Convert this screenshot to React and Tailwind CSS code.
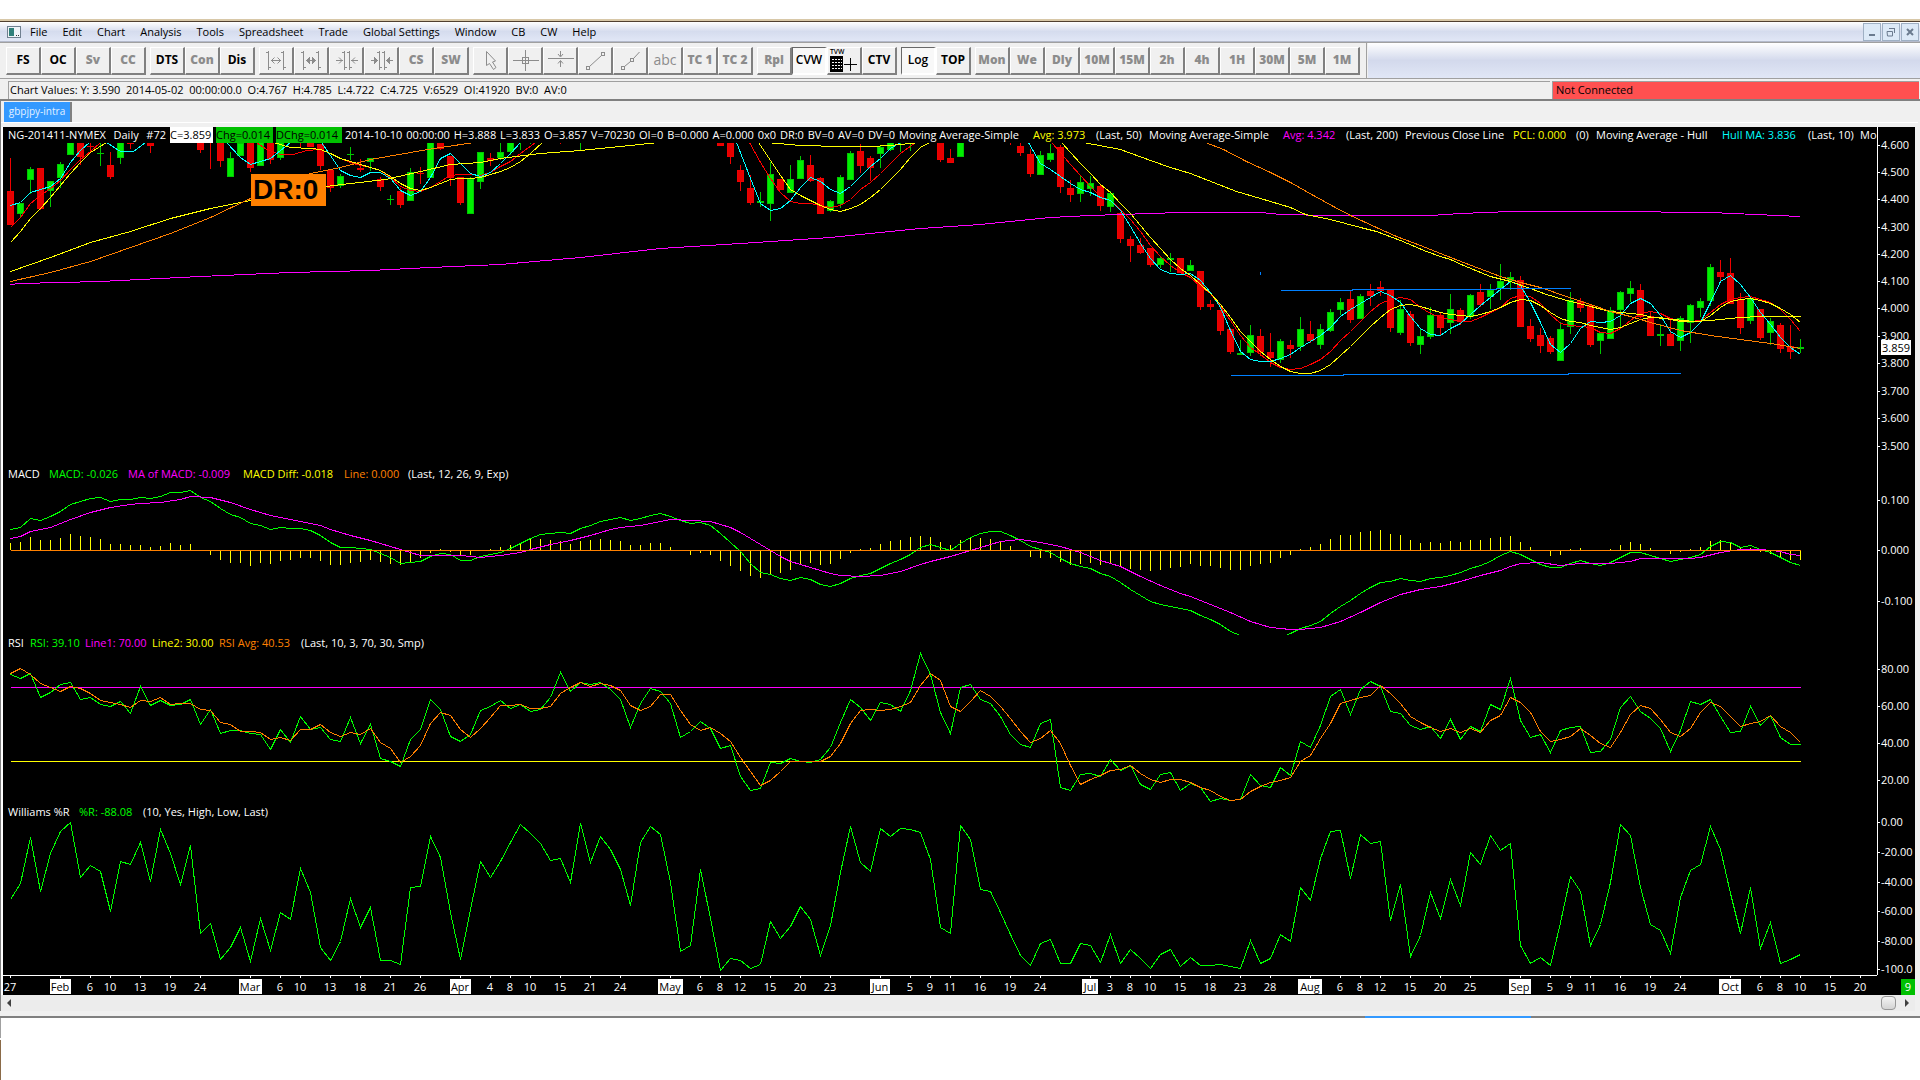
import { clsx } from 'clsx';

// Pane samples are stored in thirds of a pixel, one per bar; `base` is the value at the pane's top edge.
const BAR = 10;
const barX = (i) => 7.5 + i * BAR;
const toY = (v, base) => Math.round((v - base) / 3) + 0.5;

const MENU = ['File', 'Edit', 'Chart', 'Analysis', 'Tools', 'Spreadsheet', 'Trade', 'Global Settings', 'Window', 'CB', 'CW', 'Help'];

const TOOL_GROUPS = [
    [{ t: 'FS' }, { t: 'OC' }, { t: 'Sv', off: true }, { t: 'CC', off: true }],
    [{ t: 'DTS' }, { t: 'Con', off: true }, { t: 'Dis' }],
    [
        { icon: 'widen', t: 'Widen bars', off: true },
        { icon: 'widenBold', t: 'Widen spacing', off: true },
        { icon: 'narrow', t: 'Narrow bars', off: true },
        { icon: 'narrowBold', t: 'Narrow spacing', off: true },
        { t: 'CS', off: true },
        { t: 'SW', off: true }
    ],
    [
        { icon: 'pointer', t: 'Pointer', off: true },
        { icon: 'cross', t: 'Crosshair', off: true },
        { icon: 'hline', t: 'Horizontal line', off: true },
        { icon: 'segment', t: 'Segment', off: true },
        { icon: 'ray', t: 'Ray', off: true },
        { t: 'abc', off: true, plain: true },
        { t: 'TC 1', off: true },
        { t: 'TC 2', off: true }
    ],
    [{ t: 'Rpl', off: true }, { t: 'CVW', on: true }, { icon: 'tvw', t: 'TVW' }, { t: 'CTV' }],
    [{ t: 'Log', on: true }, { t: 'TOP' }],
    ['Mon', 'We', 'Dly', '10M', '15M', '2h', '4h', '1H', '30M', '5M', '1M'].map((t) => ({ t, off: true }))
];

// bar, high, body top, body bottom, low, up
const CANDLES = [
    [0, 114, 213, 314, 314, 0], [1, 248, 248, 283, 290, 1], [2, 141, 147, 180, 222, 1], [3, 144, 144, 267, 270, 0],
    [4, 183, 183, 212, 260, 1], [5, 126, 132, 174, 204, 1], [6, 60, 60, 104, 104, 1], [7, 60, 60, 110, 134, 0],
    [8, 60, 78, 81, 98, 0], [9, 60, 98, 101, 138, 1], [10, 96, 135, 171, 177, 0], [11, 60, 60, 114, 131, 1],
    [12, 60, 60, 71, 88, 0], [14, 60, 60, 77, 98, 0], [19, 60, 60, 90, 98, 0], [20, 60, 60, 60, 147, 0],
    [21, 60, 60, 123, 140, 0], [22, 96, 114, 171, 171, 1], [23, 66, 69, 107, 107, 1], [24, 60, 60, 143, 155, 0],
    [25, 60, 60, 137, 137, 1], [26, 60, 60, 119, 131, 0], [27, 60, 60, 113, 119, 1], [29, 60, 60, 60, 82, 0],
    [30, 60, 60, 82, 82, 0], [31, 72, 72, 137, 149, 0], [32, 147, 149, 203, 215, 0], [33, 162, 168, 197, 203, 1],
    [34, 81, 102, 106, 119, 1], [35, 117, 145, 149, 155, 0], [36, 114, 114, 126, 152, 1], [37, 170, 176, 201, 213, 0],
    [38, 225, 236, 240, 255, 1], [39, 204, 213, 255, 264, 0], [40, 144, 156, 242, 242, 1], [41, 141, 158, 162, 192, 0],
    [42, 60, 60, 173, 173, 1], [43, 60, 60, 87, 90, 0], [44, 108, 108, 174, 197, 0], [45, 171, 171, 248, 255, 0],
    [46, 171, 177, 281, 281, 1], [47, 96, 96, 185, 207, 1], [48, 99, 114, 123, 137, 0], [49, 66, 96, 114, 120, 1],
    [50, 60, 60, 95, 105, 1], [51, 60, 60, 60, 90, 1], [52, 60, 60, 60, 72, 1], [55, 60, 60, 60, 72, 0],
    [57, 60, 60, 60, 92, 1], [71, 60, 60, 77, 77, 0], [72, 60, 69, 110, 131, 0], [73, 135, 150, 185, 213, 0],
    [74, 165, 204, 248, 255, 0], [75, 216, 243, 248, 261, 1], [76, 126, 162, 251, 303, 1], [77, 177, 177, 209, 209, 0],
    [78, 135, 177, 218, 218, 1], [79, 108, 120, 177, 177, 1], [80, 105, 135, 182, 186, 0], [81, 171, 174, 281, 281, 0],
    [82, 240, 243, 272, 276, 1], [83, 165, 171, 251, 264, 1], [84, 93, 99, 180, 180, 1], [85, 72, 93, 137, 159, 0],
    [86, 108, 114, 143, 183, 0], [87, 75, 81, 101, 144, 1], [88, 60, 60, 90, 93, 1], [89, 60, 60, 60, 96, 1],
    [90, 60, 60, 60, 93, 1], [93, 60, 60, 119, 125, 0], [94, 87, 114, 128, 128, 0], [95, 60, 60, 110, 110, 1],
    [100, 60, 60, 60, 75, 0], [101, 66, 78, 99, 107, 0], [102, 87, 102, 161, 170, 0], [103, 93, 105, 164, 164, 1],
    [104, 72, 99, 119, 125, 1], [105, 75, 81, 201, 219, 0], [106, 180, 204, 225, 246, 0], [107, 168, 186, 221, 246, 1],
    [108, 168, 189, 207, 228, 1], [109, 192, 198, 257, 273, 0], [110, 213, 219, 261, 276, 1], [111, 276, 279, 357, 369, 0],
    [112, 348, 357, 377, 426, 0], [113, 354, 375, 399, 402, 0], [114, 384, 384, 434, 441, 0], [115, 408, 414, 434, 444, 1],
    [116, 399, 414, 419, 456, 1], [117, 414, 414, 458, 458, 0], [118, 420, 435, 453, 453, 1], [119, 453, 453, 561, 570, 0],
    [120, 540, 551, 561, 570, 0], [121, 570, 570, 633, 645, 0], [122, 624, 627, 696, 702, 0], [123, 660, 699, 704, 704, 1],
    [124, 615, 645, 699, 708, 1], [125, 627, 648, 696, 708, 0], [126, 639, 696, 714, 741, 0], [127, 657, 663, 720, 728, 1],
    [128, 660, 675, 686, 714, 0], [129, 591, 627, 681, 692, 1], [130, 603, 642, 662, 670, 0], [131, 612, 627, 674, 686, 1],
    [132, 567, 576, 633, 636, 1], [133, 534, 546, 570, 585, 1], [134, 513, 537, 600, 609, 0], [135, 522, 528, 597, 597, 1],
    [136, 492, 513, 528, 558, 0], [137, 483, 501, 513, 528, 0], [138, 507, 507, 624, 636, 0], [139, 540, 567, 638, 645, 1],
    [140, 573, 582, 669, 678, 0], [141, 627, 648, 675, 702, 1], [142, 561, 585, 650, 657, 1], [143, 579, 585, 624, 645, 0],
    [144, 522, 567, 609, 642, 1], [145, 564, 570, 605, 615, 0], [146, 522, 525, 591, 597, 1], [147, 492, 516, 555, 561, 0],
    [148, 492, 510, 531, 567, 1], [149, 431, 483, 506, 540, 1], [150, 456, 471, 483, 510, 1], [151, 468, 480, 621, 621, 0],
    [152, 597, 618, 657, 666, 0], [153, 624, 645, 677, 699, 0], [154, 648, 654, 695, 702, 0], [155, 606, 627, 723, 723, 1],
    [156, 516, 540, 621, 642, 1], [157, 534, 543, 564, 576, 0], [158, 552, 555, 674, 681, 0], [159, 639, 639, 662, 702, 1],
    [160, 561, 570, 657, 657, 1], [161, 513, 516, 570, 624, 1], [162, 483, 504, 521, 546, 1], [163, 492, 510, 591, 594, 0],
    [164, 576, 588, 648, 648, 0], [165, 612, 642, 647, 678, 1], [166, 597, 642, 677, 678, 0], [167, 588, 594, 663, 693, 1],
    [168, 552, 555, 609, 669, 1], [169, 534, 543, 564, 591, 1], [170, 432, 441, 543, 558, 1], [171, 420, 456, 471, 486, 0],
    [172, 414, 459, 552, 552, 0], [173, 519, 537, 624, 642, 0], [174, 528, 534, 603, 612, 1], [175, 567, 567, 654, 660, 0],
    [176, 594, 603, 639, 675, 1], [177, 609, 615, 687, 699, 0], [178, 615, 678, 696, 717, 0], [179, 657, 681, 686, 699, 1]
];

const seq = (start, values) => values.map((v, k) => [start + k, v]);

const PRICE_LINES = [
    // moving average 200
    { color: '#ff00ff', pts: [[0, 491], [1, 488], [9, 482], [19, 467], [28, 457], [36, 450], [42, 442], [49, 433], [57, 412], [65, 385], [73, 370], [82, 350], [91, 323], [97, 311], [104, 292], [108, 285], [111, 282], [117, 277], [125, 277], [127, 281], [132, 284], [142, 284], [145, 279], [150, 274], [160, 274], [170, 277], [179, 287]] },
    // hull 30
    { color: '#ff0000', pts: [[0, 322], [1, 290], [2, 250], [3, 224], [4, 204], [5, 180], [6, 148], [7, 118], [8, 92], [9, 66]] },
    { color: '#ff0000', pts: [[24.6, 66], [25.6, 88], [27, 103], [28.3, 102], [29.6, 90], ...seq(31, [87, 98, 115, 127, 135, 140, 150, 172, 198, 210, 212, 200, 182, 166, 163, 163, 166, 155, 137, 122, 100]), [52.5, 66]] },
    { color: '#ff0000', pts: [[73.9, 66], ...seq(75, [127, 175, 215, 243, 249, 250, 256, 262, 255, 238, 208, 185, 158, 130, 100]), [90.5, 66]] },
    { color: '#ff0000', pts: [[104.1, 66], ...seq(105, [95, 132, 165, 198, 228, 240, 268, 298, 332, 375, 407, 435, 456, 472, 497, 520, 558, 600, 645, 680, 702, 725, 740, 748, 744, 733, 718, 692, 660, 633, 602, 572, 548, 536, 532, 538, 560, 578, 592, 597, 604, 602, 592, 577, 560, 535, 526, 529, 550, 582, 608, 614, 618, 622, 635, 638, 625, 600, 578, 573, 580, 593, 600, 604, 600, 577, 552, 538, 532, 529, 538, 547, 566, 597, 632])] },
    // hull 10
    { color: '#00ffff', pts: [...seq(0, [254, 245, 216, 207, 198, 173, 125, 90]), [7.9, 66]] },
    { color: '#00ffff', pts: [[9.6, 66], [11, 93], [12.3, 93], [13.5, 66]] },
    { color: '#00ffff', pts: [[21.6, 66], [23, 110], [24, 132], [25, 123], [26, 113], [27, 90], [28, 66]] },
    { color: '#00ffff', pts: [[31.1, 66], ...seq(32, [105, 150, 165, 172, 155, 155, 173, 210, 226, 212, 170, 115, 98, 130, 160, 167, 155, 130, 100, 66])] },
    { color: '#00ffff', pts: [[72.6, 66], ...seq(74, [175, 250, 270, 265, 240, 200, 170, 182, 208, 220, 198, 167, 138, 113, 85, 66])] },
    { color: '#00ffff', pts: [[101.8, 66], ...seq(103, [128, 147, 168, 190, 208, 215, 230, 240, 270, 318, 370, 415, 447, 458, 463, 460, 480, 515, 560, 630, 692, 716, 724, 724, 714, 702, 680, 662, 645, 622, 588, 568, 548, 530, 514, 525, 546, 588, 625, 642, 644, 623, 608, 582, 555, 530, 506, 482, 496, 545, 605, 672, 697, 670, 625, 604, 607, 604, 585, 548, 535, 550, 585, 633, 650, 637, 605, 545, 482, 466, 493, 530, 577, 612, 652, 680, 701])] },
    // hull 40
    { color: '#ffff00', pts: [...seq(0, [365, 333, 295, 265, 230, 195, 158, 125, 97]), [9.6, 66]] },
    { color: '#ffff00', pts: [[26.3, 66], [28, 80], [30, 85], ...seq(31, [88, 98, 114, 122, 132, 140, 150, 168, 190, 204, 209, 202, 190, 178, 175, 174, 172, 163, 154, 141, 122, 100]), [53.2, 66]] },
    { color: '#ffff00', pts: [[74.8, 66], ...seq(76, [120, 165, 207, 226, 240, 256, 267, 273, 265, 253, 232, 207, 178, 147, 112, 80]), [91.9, 66]] },
    { color: '#ffff00', pts: [[105.1, 66], ...seq(107, [128, 160, 192, 215, 250, 280, 316, 350, 385, 418, 445, 466, 492, 520, 553, 592, 633, 663, 693, 717, 738, 752, 760, 758, 750, 733, 705, 678, 648, 618, 590, 568, 556, 553, 558, 567, 575, 582, 586, 587, 582, 574, 562, 545, 538, 540, 555, 575, 593, 602, 606, 614, 622, 626, 622, 610, 597, 592, 592, 597, 602, 604, 602, 585, 562, 544, 538, 535, 541, 550, 563, 582, 605])] },
    // moving average 50
    { color: '#ffff00', pts: [[0, 452], [4, 410], [8, 365], [12, 333], [16, 293], [20, 264], [24, 240], [31.6, 197], [34, 189], [37.5, 177], [41, 154], [44, 133], [47, 125], [49, 113], [53, 98], [57, 90], [61, 77], [64.8, 66]] },
    { color: '#ffff00', pts: [[75.6, 66], [79, 74], [83, 79], [86, 79], [88, 75], [91, 66]] },
    { color: '#ffff00', pts: [[107.3, 66], [111, 88], [114, 120], [116, 140], [118, 158], [120.3, 185], [122.6, 212], [125, 233], [128, 262], [129.5, 282], [132, 298], [135, 322], [136.6, 333], [139, 360], [141.6, 393], [143, 408], [144, 418], [145.3, 435], [148, 467], [150, 483], [152, 505], [153.6, 522], [155.3, 536], [158, 558], [160, 572], [163, 583], [164.3, 590], [166.3, 598], [168.3, 604], [170, 600], [173, 592], [175, 589], [179, 589]] },
    // moving average 100
    { color: '#ff8000', pts: [[0, 482], [4, 455], [8, 423], [12, 382], [16, 340], [20, 290], [24, 235], [30, 160], [33, 142], [36, 117], [40, 97], [43, 82], [46.4, 66]] },
    { color: '#ff8000', pts: [[119.5, 66], [121.3, 88], [123.6, 122], [126, 157], [128, 187], [130.3, 225], [132.3, 258], [134, 285], [136.6, 322], [138.6, 348], [141, 376], [143, 400], [145.3, 425], [149, 468], [151, 485], [153, 502], [155.6, 529], [158, 552], [160, 572], [162, 587], [164, 606], [167, 630], [170, 645], [173, 657], [176, 668], [179, 684]] },
    // channel
    { color: '#0080ff', pts: [[127, 511], [134.2, 511], [134.2, 508], [148.6, 508], [148.6, 505], [156, 505]] },
    { color: '#0080ff', pts: [[122, 766], [133.3, 766], [133.3, 763], [155.8, 763], [155.8, 760], [167, 760]] },
    { color: '#0080ff', pts: [[125, 453], [125, 462]] }
];

const MACD_DIFF = [
    249, 246, 231, 240, 240, 234, 222, 228, 231, 237, 252, 252, 255, 255, 261, 258, 249, 255, 252, 275,
    285, 300, 309, 309, 318, 309, 312, 303, 300, 294, 294, 303, 315, 315, 309, 306, 300, 306, 312, 315,
    306, 296, 279, 267, 276, 290, 286, 274, 267, 261, 255, 249, 237, 237, 240, 243, 252, 243, 240, 237,
    240, 243, 255, 255, 249, 249, 261, 275, 285, 279, 285, 303, 318, 333, 348, 354, 345, 339, 330, 312,
    309, 315, 312, 297, 279, 267, 264, 252, 243, 240, 231, 228, 231, 246, 255, 240, 234, 234, 237, 246,
    258, 275, 291, 294, 294, 306, 315, 312, 309, 315, 312, 320, 327, 330, 333, 330, 324, 321, 312, 318,
    318, 324, 330, 330, 318, 312, 309, 294, 285, 267, 261, 252, 237, 225, 225, 216, 213, 210, 222, 225,
    240, 249, 246, 249, 243, 246, 240, 240, 234, 231, 228, 246, 261, 275, 288, 285, 267, 264, 275, 275,
    267, 255, 246, 252, 264, 275, 282, 276, 267, 261, 243, 240, 249, 261, 264, 278, 282, 291, 300, 300
];

const MACD = [
    208, 200, 175, 179, 168, 152, 131, 122, 115, 112, 124, 118, 118, 112, 115, 109, 97, 97, 91, 110,
    124, 145, 162, 172, 189, 194, 206, 202, 205, 205, 211, 225, 245, 260, 260, 265, 268, 279, 292, 310,
    307, 303, 287, 278, 283, 299, 299, 287, 283, 275, 263, 250, 234, 221, 220, 216, 220, 204, 195, 182,
    176, 172, 181, 175, 166, 160, 169, 180, 190, 187, 195, 218, 246, 273, 308, 336, 343, 354, 361, 352,
    356, 371, 379, 370, 353, 344, 338, 325, 310, 296, 281, 262, 253, 261, 270, 248, 230, 220, 214, 214,
    225, 240, 258, 267, 275, 293, 310, 319, 325, 339, 347, 365, 387, 406, 424, 432, 437, 444, 449, 465,
    476, 492, 512, 525, 540, 545, 540, 530, 520, 505, 496, 482, 458, 437, 421, 400, 382, 366, 364, 355,
    361, 364, 355, 352, 344, 337, 323, 314, 302, 286, 272, 282, 297, 311, 322, 322, 310, 300, 310, 314,
    305, 291, 277, 277, 285, 295, 304, 298, 290, 282, 259, 244, 247, 260, 256, 268, 276, 292, 305, 314
];

const MACD_MA = [
    [0, 233], [1, 227], [2, 214], [4, 200], [6, 178], [8, 157], [10, 142], [12, 133], [13, 130], [15, 126], [17, 117], [18, 109], [20, 111],
    [22, 127], [24, 148], [26, 165], [28, 178], [30, 189], [31, 194], [32, 208], [34, 226], [36, 240], [38, 258], [40, 276], [41, 284],
    [45, 284], [47, 290], [49, 284], [51, 277], [52, 268], [54, 251], [56, 240], [58, 224], [60, 207], [61, 200], [63, 194], [65, 182],
    [66, 178], [68, 181], [70, 184], [71, 192], [72, 202], [73, 215], [74, 235], [75, 251], [76, 270], [77, 289], [78, 303], [80, 322],
    [82, 339], [83, 346], [85, 347], [87, 346], [89, 333], [91, 313], [92, 303], [94, 287], [95, 278], [97, 262], [99, 242], [101, 238],
    [103, 245], [105, 258], [107, 277], [109, 300], [111, 318], [113, 347], [115, 374], [117, 398], [118, 407], [120, 431], [122, 455],
    [124, 483], [126, 502], [128, 508], [129, 508], [131, 502], [133, 483], [135, 455], [137, 425], [139, 401], [141, 388], [143, 377],
    [145, 362], [147, 346], [149, 329], [150, 317], [151, 310], [153, 307], [155, 314], [157, 310], [160, 310], [162, 303], [163, 295],
    [168, 295], [169, 291], [171, 277], [173, 268], [175, 266], [176, 269], [177, 273], [178, 281], [179, 286]
];

const RSI = [
    643, 655, 640, 712, 695, 671, 667, 718, 712, 732, 737, 724, 759, 677, 736, 721, 736, 733, 716, 791,
    747, 818, 811, 811, 820, 821, 867, 808, 847, 769, 807, 801, 836, 844, 772, 850, 793, 895, 904, 918,
    838, 808, 718, 746, 829, 844, 823, 749, 738, 721, 745, 732, 752, 748, 711, 637, 693, 667, 671, 665,
    687, 718, 802, 729, 685, 692, 729, 832, 812, 784, 804, 865, 856, 948, 991, 985, 905, 910, 895, 904,
    907, 897, 860, 787, 718, 741, 781, 727, 733, 753, 690, 580, 643, 757, 818, 681, 673, 717, 730, 767,
    821, 853, 862, 788, 778, 982, 989, 943, 940, 948, 898, 931, 916, 971, 988, 943, 937, 991, 969, 981,
    1024, 1015, 1021, 1016, 943, 975, 982, 922, 945, 844, 862, 795, 707, 688, 761, 687, 663, 679, 753, 758,
    795, 806, 799, 835, 777, 836, 797, 812, 733, 746, 655, 780, 832, 823, 875, 809, 802, 799, 877, 874,
    836, 740, 709, 752, 773, 803, 874, 811, 724, 733, 718, 767, 817, 813, 737, 796, 764, 832, 853, 853
];

const RSI_AVG = RSI.map((v, i) => (i < 3 ? [640, 625, 643][i] : (v + RSI[i - 1] + RSI[i - 2]) / 3));

const WILLIAMS = [
    326, 278, 142, 302, 190, 122, 96, 260, 224, 242, 362, 214, 223, 157, 274, 118, 188, 281, 166, 428,
    398, 506, 470, 412, 512, 385, 479, 365, 387, 235, 305, 470, 511, 452, 325, 410, 352, 511, 511, 521,
    292, 289, 139, 200, 365, 506, 358, 214, 260, 212, 157, 102, 130, 160, 211, 205, 277, 100, 217, 139,
    178, 238, 344, 157, 108, 132, 275, 482, 464, 238, 385, 541, 505, 509, 535, 523, 394, 443, 409, 349,
    388, 496, 404, 245, 109, 217, 243, 115, 139, 115, 118, 125, 208, 412, 430, 106, 148, 298, 304, 365,
    433, 494, 526, 460, 448, 520, 520, 460, 464, 517, 433, 520, 478, 505, 535, 492, 478, 529, 502, 526,
    526, 523, 529, 535, 451, 520, 503, 433, 454, 290, 331, 203, 124, 121, 265, 133, 160, 154, 389, 283,
    499, 436, 307, 383, 268, 345, 187, 223, 136, 181, 160, 466, 520, 502, 526, 397, 259, 302, 466, 403,
    277, 103, 134, 292, 403, 421, 488, 322, 241, 223, 109, 178, 310, 430, 290, 475, 397, 520, 508, 491
];

const DATES = [
    [0, '27'], [5, 'Feb', 21], [8, '6'], [10, '10'], [13, '13'], [16, '19'], [19, '24'], [24, 'Mar', 23], [27, '6'], [29, '10'],
    [32, '13'], [35, '18'], [38, '21'], [41, '26'], [45, 'Apr', 21], [48, '4'], [50, '8'], [52, '10'], [55, '15'], [58, '21'],
    [61, '24'], [66, 'May', 25], [69, '6'], [71, '8'], [73, '12'], [76, '15'], [79, '20'], [82, '23'], [87, 'Jun', 20], [90, '5'],
    [92, '9'], [94, '11'], [97, '16'], [100, '19'], [103, '24'], [108, 'Jul', 16], [110, '3'], [112, '8'], [114, '10'], [117, '15'],
    [120, '18'], [123, '23'], [126, '28'], [130, 'Aug', 24], [133, '6'], [135, '8'], [137, '12'], [140, '15'], [143, '20'], [146, '25'],
    [151, 'Sep', 22], [154, '5'], [156, '9'], [158, '11'], [161, '16'], [164, '19'], [167, '24'], [172, 'Oct', 22], [175, '6'],
    [177, '8'], [179, '10'], [182, '15'], [185, '20']
];

const PRICE_TICKS = [
    [19, '4.600'], [46, '4.500'], [73, '4.400'], [101, '4.300'], [128, '4.200'], [155, '4.100'],
    [182, '4.000'], [210, '3.900'], [237, '3.800'], [265, '3.700'], [292, '3.600'], [320, '3.500']
];

const Line = ({ pts, color, base }) => (
    <polyline
        points={pts.map(([i, v]) => `${barX(i)},${toY(v, base)}`).join(' ')}
        fill="none"
        stroke={color}
        strokeWidth="1"
    />
);

const Candle = ({ bar, base }) => {
    const [i, high, top, bottom, low, up] = bar;
    const x = 4 + i * BAR;
    const yHigh = Math.round((high - base) / 3);
    const yLow = Math.round((low - base) / 3);
    const yTop = Math.round((top - base) / 3);
    const yBottom = Math.round((bottom - base) / 3);
    const edge = up ? '#00c800' : '#f00000';

    return (
        <g>
            <rect x={x + 3} y={yHigh} width="1" height={Math.max(yLow - yHigh, 1)} fill={edge} />
            {bottom > top && <rect x={x} y={yTop} width="7" height={Math.max(yBottom - yTop, 1)} fill={edge} />}
            {yBottom - yTop > 2 && (
                <rect x={x + 1} y={yTop + 1} width="5" height={yBottom - yTop - 2} fill={up ? '#00ee00' : '#e60000'} />
            )}
        </g>
    );
};

const Axis = ({ ticks, marker }) => (
    <svg className="h-full w-[38px] shrink-0 border-l border-white" aria-hidden="true">
        {ticks.map(([y, label]) => (
            <g key={label}>
                <rect x="0" y={y - 1} width="2" height="1" fill="#fff" />
                <text x="3" y={y + 3} fill="#fff" fontSize="11">{label}</text>
            </g>
        ))}
        {marker && (
            <g>
                <rect x="3" y={marker[0] - 8} width="30" height="15" fill="#fff" />
                <text x="4" y={marker[0] + 4} fill="#000" fontSize="11">{marker[1]}</text>
            </g>
        )}
    </svg>
);

const Pane = ({ height, header, ticks, marker, children }) => (
    <section className={clsx('flex w-full', height)}>
        <div className="flex min-w-0 flex-1 flex-col overflow-hidden">
            <div className="flex h-4 shrink-0 items-center overflow-hidden whitespace-pre pl-[5px] leading-4">{header}</div>
            <svg className="block w-full min-h-0 flex-1" shapeRendering="crispEdges">{children}</svg>
        </div>
        <Axis ticks={ticks} marker={marker} />
    </section>
);

const ToolIcon = ({ name }) => {
    const common = {
        width: 29, height: 22, viewBox: '0 0 29 22', fill: 'none',
        stroke: '#8c8c8c', strokeWidth: 1, shapeRendering: 'crispEdges'
    };
    switch (name) {
        case 'widen':
            return (
                <svg {...common}>
                    <path d="M6.5 2v19M21.5 2v19M4 3.5h2M7 18.5h2M19 3.5h2M22 18.5h2M9 11.5h10" />
                    <path d="M12.5 8.5l-3 3 3 3M15.5 8.5l3 3-3 3" shapeRendering="auto" />
                </svg>
            );
        case 'widenBold':
            return (
                <svg {...common}>
                    <path d="M6.5 2v19M21.5 2v19M4 3.5h2M7 18.5h2M19 3.5h2M22 18.5h2M9 11.5h10" />
                    <path d="M13 7.5l-4 4 4 4zM15 7.5l4 4-4 4z" fill="#8c8c8c" stroke="none" />
                </svg>
            );
        case 'narrow':
            return (
                <svg {...common}>
                    <path d="M12.5 2v19M17.5 2v19M10 3.5h2M13 18.5h2M15 3.5h2M18 18.5h2M4 11.5h7M19 11.5h7" />
                    <path d="M7 8.5l3 3-3 3M23 8.5l-3 3 3 3" shapeRendering="auto" />
                </svg>
            );
        case 'narrowBold':
            return (
                <svg {...common}>
                    <path d="M12.5 2v19M17.5 2v19M10 3.5h2M13 18.5h2M15 3.5h2M18 18.5h2M4 11.5h7M19 11.5h7" />
                    <path d="M7 7.5l4 4-4 4zM23 7.5l-4 4 4 4z" fill="#8c8c8c" stroke="none" />
                </svg>
            );
        case 'pointer':
            return (
                <svg {...common} shapeRendering="auto">
                    <path d="M10.5 2.5v14l3-2 4 6 2.5-2-3.5-5.5 3-1z" />
                </svg>
            );
        case 'cross':
            return (
                <svg {...common}>
                    <path d="M2 11.5h26M14.5 1v21M11.5 8.5h6v6h-6z" />
                </svg>
            );
        case 'hline':
            return (
                <svg {...common}>
                    <path d="M2 9.5h26M14.5 2v5M14.5 12v6" />
                    <path d="M12 5l2.5 3L17 5M12 14.5l2.5-3 2.5 3" shapeRendering="auto" />
                </svg>
            );
        case 'segment':
            return (
                <svg {...common}>
                    <path d="M5.5 17.5h3v3h-3zM20.5 3.5h3v3h-3z" />
                    <path d="M8.5 17.5L20.5 6.5" shapeRendering="auto" />
                </svg>
            );
        case 'ray':
            return (
                <svg {...common}>
                    <path d="M5.5 17.5h3v3h-3zM14.5 9.5h3v3h-3z" />
                    <path d="M8.5 17.5l6-5M17.5 9.5l6-6.5" shapeRendering="auto" />
                </svg>
            );
        default:
            return (
                <svg {...common} width="33" height="25" viewBox="0 0 33 25" stroke="#000">
                    <text x="2" y="6" fontSize="7" fontWeight="600" fill="#000" stroke="none">TVW</text>
                    <rect x="2" y="8" width="13" height="16" fill="#000" stroke="none" />
                    <path d="M4 11.5h10M4 14.5h10M4 17.5h10M4 20.5h10" stroke="#fff" strokeDasharray="2 1" />
                    <path d="M17 16.5h13M23.5 10v13" />
                </svg>
            );
    }
};

const ToolButton = ({ tool }) => (
    <button
        type="button"
        disabled={tool.off}
        aria-label={tool.t}
        aria-pressed={tool.on}
        className={clsx(
            'flex h-7 w-[35px] items-center justify-center overflow-hidden border-r-2 border-b-2 border-l border-t leading-4',
            tool.on
                ? 'border-l-[#696969] border-t-[#696969] border-r-white border-b-white bg-[#f8f8f8] text-black'
                : 'border-l-white border-t-white border-r-[#808080] border-b-[#808080] bg-[#f0f0f0]',
            tool.off && 'text-[#8c8c8c]',
            tool.plain ? 'text-sm font-normal' : 'text-[12px]',
            tool.off && !tool.plain && 'font-extrabold',
            !tool.off && (tool.on ? 'font-semibold' : 'font-bold')
        )}
    >
        {tool.icon ? <ToolIcon name={tool.icon} /> : tool.t}
    </button>
);

const MenuBar = () => (
    <nav className="flex h-5 items-center border-b border-[#b4bacb] bg-linear-to-b from-white via-[#d5dcee] to-[#e1e7f6]">
        <svg className="ml-[7px] shrink-0" width="14" height="12" viewBox="0 0 14 12" aria-hidden="true">
            <rect x="0.5" y="0.5" width="13" height="11" fill="#eef3f8" stroke="#708090" />
            <rect x="2" y="2" width="5" height="8" fill="#2f7f7a" />
            <path d="M9 9.5h1M11 9.5h1" stroke="#333" />
        </svg>
        <div className="flex flex-1 items-center gap-[15px] pl-[9px]">
            {MENU.map((item) => (
                <button key={item} type="button" className="leading-4 text-black">{item}</button>
            ))}
        </div>
        <div className="flex gap-px pr-px">
            {['Minimize', 'Restore', 'Close'].map((label) => (
                <button key={label} type="button" aria-label={label} className="flex h-[18px] w-[18px] items-center justify-center border border-[#9fb0c4] bg-[#dce9f7]">
                    <svg width="10" height="10" viewBox="0 0 10 10" fill="none" stroke="#6b7b8f" strokeWidth="2">
                        {label === 'Minimize' && <path d="M2 8h6" />}
                        {label === 'Restore' && <path d="M3 1.5h6M8.5 1v5M1 4.5h5.5V9h-5z" strokeWidth="1" />}
                        {label === 'Close' && <path d="M2 2l6 6M8 2l-6 6" />}
                    </svg>
                </button>
            ))}
        </div>
    </nav>
);

const HEADER = [
    { t: 'NG-201411-NYMEX Daily #72', w: 'w-[158px]', c: 'mr-1', spread: true },
    { t: 'C=3.859', w: 'w-[43px]', c: 'mr-[3px] bg-white text-black' },
    { t: 'Chg=0.014', w: 'w-[57px]', c: 'mr-[3px] bg-[#00c000] text-black' },
    { t: 'DChg=0.014', w: 'w-[66px]', c: 'mr-[3px] bg-[#00c000] text-black' },
    {
        t: '2014-10-10 00:00:00 H=3.888 L=3.833 O=3.857 V=70230 OI=0 B=0.000 A=0.000 0x0 DR:0 BV=0 AV=0 DV=0',
        w: 'w-[550px]',
        c: 'mr-1',
        spread: true
    },
    { t: 'Moving Average-Simple', w: 'w-[134px]' },
    { t: 'Avg: 3.973', w: 'w-[63px]', c: 'text-[#ffff00]' },
    { t: '(Last, 50)', w: 'w-[53px]' },
    { t: 'Moving Average-Simple', w: 'w-[134px]' },
    { t: 'Avg: 4.342', w: 'w-[63px]', c: 'text-[#ff00ff]' },
    { t: '(Last, 200)', w: 'w-[59px]' },
    { t: 'Previous Close Line', w: 'w-[108px]' },
    { t: 'PCL: 0.000', w: 'w-[63px]', c: 'text-[#ffff00]' },
    { t: '(0)', w: 'w-[20px]' },
    { t: 'Moving Average - Hull', w: 'w-[126px]' },
    { t: 'Hull MA: 3.836', w: 'w-[86px]', c: 'text-[#00ffff]' },
    { t: '(Last, 10)', w: 'w-[52px]' },
    { t: 'Mo', w: 'w-[17px]' }
];

const HeaderItem = ({ item }) => (
    <span className={clsx('h-4 shrink-0', item.w, item.c, item.spread && 'flex justify-between')}>
        {item.spread ? item.t.split(' ').map((word, k) => <span key={k}>{word}</span>) : item.t}
    </span>
);

const Legend = ({ items }) => items.map(([text, color, width]) => (
    <span key={text} className={clsx('shrink-0', color, width)}>{text}</span>
));

const App = () => {
    return (
        <div className="min-h-screen bg-white pt-[19px] font-['Open_Sans','Noto_Sans',sans-serif] text-[11px] text-black">
            <div className="h-[3px] border-b border-[#504030] bg-[#d8c8a8]" />
            <MenuBar />

            <div className="flex h-[37px] border-y border-[#a0a0a0] bg-[#f0f0f0]">
                <div className="flex items-center gap-1 border-r border-[#a0a0a0] pl-[6px] pr-[6px]">
                    {TOOL_GROUPS.map((group) => (
                        <div key={group[0].t} className="flex">
                            {group.map((tool) => <ToolButton key={tool.t} tool={tool} />)}
                        </div>
                    ))}
                </div>
                <div className="ml-px flex-1 bg-linear-to-b from-white via-[#d3d9ec] to-[#e1e7f6]" />
            </div>

            <div className="flex h-[22px] items-end gap-[2px] border-b-2 border-[#808080] bg-[#f0f0f0] pl-2 pr-px">
                <div className="h-[18px] flex-1 overflow-hidden whitespace-pre border-l border-t border-[#a0a0a0] pl-px leading-4">
                    Chart Values: Y: 3.590  2014-05-02  00:00:00.0  O:4.767  H:4.785  L:4.722  C:4.725  V:6529  OI:41920  BV:0  AV:0
                </div>
                <div className="h-[18px] w-[367px] border-l border-t border-[#a0a0a0] bg-[#ff5050] pl-[3px] leading-4">Not Connected</div>
            </div>

            <div className="border-l border-[#808080] bg-[#f0f0f0] pr-[2px]">
                <div className="flex h-[22px] items-end border-b border-white pl-[3px]">
                    <button type="button" className="h-5 w-[68px] border-r-2 border-[#808080] bg-[#3399ff] pb-[2px] text-center text-[10px] leading-4 text-[#e4f1ff]">gbpjpy-intra</button>
                </div>
                <div className="h-1" />

                <main className="mr-[3px] border-l-2 border-white bg-black text-white">
                    <div className="relative">
                        <Pane
                            height="h-[339px]"
                            ticks={PRICE_TICKS}
                            marker={[221, '3.859']}
                            header={HEADER.map((item, k) => <HeaderItem key={k} item={item} />)}
                        >
                            {CANDLES.map((bar) => <Candle key={bar[0]} bar={bar} base={69} />)}
                            {PRICE_LINES.map((l, k) => <Line key={k} pts={l.pts} color={l.color} base={69} />)}
                        </Pane>
                        <div className="absolute left-[248px] top-[47px] h-8 w-[75px] bg-[#ff8000] pl-[2px] font-['Liberation_Sans',sans-serif] text-[28px] font-bold leading-8 text-black">
                            DR:0
                        </div>
                    </div>

                    <Pane
                        height="h-[169px]"
                        ticks={[[35, '0.100'], [85, '0.000'], [136, '-0.100']]}
                        header={(
                            <Legend
                                items={[
                                    ['MACD', 'text-white', 'w-[41px]'],
                                    ['MACD: -0.026', 'text-[#00ff00]', 'w-[79px]'],
                                    ['MA of MACD: -0.009', 'text-[#ff00ff]', 'w-[115px]'],
                                    ['MACD Diff: -0.018', 'text-[#ffff00]', 'w-[101px]'],
                                    ['Line: 0.000', 'text-[#ff8000]', 'w-[64px]'],
                                    ['(Last, 12, 26, 9, Exp)', 'text-white', 'w-[120px]']
                                ]}
                            />
                        )}
                    >
                        {MACD_DIFF.map((v, i) => (
                            <rect key={i} x={7 + i * BAR} y={Math.round((Math.min(v, 271) - 66) / 3)} width="1" height={Math.max(Math.round(Math.abs(v - 271) / 3), 1)} fill="#ffff00" />
                        ))}
                        <Line pts={seq(0, MACD)} color="#00ff00" base={66} />
                        <Line pts={MACD_MA} color="#ff00ff" base={66} />
                        <Line pts={[[0, 271], [179, 271]]} color="#ff8000" base={66} />
                    </Pane>

                    <Pane
                        height="h-[169px]"
                        ticks={[[35, '80.00'], [72, '60.00'], [109, '40.00'], [146, '20.00']]}
                        header={(
                            <Legend
                                items={[
                                    ['RSI', 'text-white', 'w-[22px]'],
                                    ['RSI: 39.10', 'text-[#00ff00]', 'w-[55px]'],
                                    ['Line1: 70.00', 'text-[#ff00ff]', 'w-[67px]'],
                                    ['Line2: 30.00', 'text-[#ffff00]', 'w-[67px]'],
                                    ['RSI Avg: 40.53', 'text-[#ff8000]', 'w-[82px]'],
                                    ['(Last, 10, 3, 70, 30, Smp)', 'text-white', 'w-[140px]']
                                ]}
                            />
                        )}
                    >
                        <Line pts={[[0, 682], [179, 682]]} color="#ff00ff" base={573} />
                        <Line pts={[[0, 904], [179, 904]]} color="#ffff00" base={573} />
                        <Line pts={seq(0, RSI)} color="#00ff00" base={573} />
                        <Line pts={seq(0, RSI_AVG)} color="#ff8000" base={573} />
                    </Pane>

                    <Pane
                        height="h-[171px]"
                        ticks={[[19, '0.00'], [49, '-20.00'], [79, '-40.00'], [108, '-60.00'], [138, '-80.00'], [166, '-100.0']]}
                        header={(
                            <Legend
                                items={[
                                    ['Williams %R', 'text-white', 'w-[71px]'],
                                    ['%R: -88.08', 'text-[#00ff00]', 'w-[64px]'],
                                    ['(10, Yes, High, Low, Last)', 'text-white', 'w-[150px]']
                                ]}
                            />
                        )}
                    >
                        <Line pts={seq(0, WILLIAMS)} color="#00ff00" base={90} />
                    </Pane>

                    <div className="flex h-5">
                        <svg className="h-full min-w-0 flex-1" aria-hidden="true">
                            <rect x="0" y="0" width="100%" height="1" fill="#fff" />
                            {DATES.map(([i, label, box]) => (
                                <g key={i}>
                                    <rect x={7 + i * BAR} y="0" width="1" height="3" fill="#fff" />
                                    {box && <rect x={Math.round(7 + i * BAR - box / 2)} y="4" width={box} height="15" fill="#fff" />}
                                    <text x={7 + i * BAR} y="16" textAnchor="middle" fontSize="11" fill={box ? '#000' : '#fff'}>{label}</text>
                                </g>
                            ))}
                        </svg>
                        <div className="flex w-[38px] items-end justify-end">
                            <span className="h-4 w-[14px] bg-[#00c000] text-center leading-4 text-white">9</span>
                        </div>
                    </div>
                </main>

                <div className="mr-[3px] flex h-4 items-center bg-[#ececec]">
                    <button type="button" aria-label="Scroll left" className="flex w-4 justify-center">
                        <svg width="4" height="8" viewBox="0 0 4 8"><path d="M4 0v8L0 4z" fill="#404040" /></svg>
                    </button>
                    <div className="flex flex-1 justify-end pr-[3px]">
                        <div className="h-[14px] w-[15px] rounded-sm border border-[#979797] bg-linear-to-b from-[#f4f4f4] to-[#d4d4d4]" />
                    </div>
                    <button type="button" aria-label="Scroll right" className="flex w-4 justify-center">
                        <svg width="4" height="8" viewBox="0 0 4 8"><path d="M0 0v8l4-4z" fill="#404040" /></svg>
                    </button>
                </div>
            </div>

            <div className="flex h-[7px] items-end bg-[#f0f0f0]">
                <div className="h-[2px] w-[1365px] bg-[#808080]" />
                <div className="h-[2px] w-[166px] bg-[#3399ff]" />
                <div className="h-[2px] flex-1 bg-[#808080]" />
            </div>
            <div className="h-5 w-px bg-[#a0a0a0]" />
            <div className="mt-[2px] h-10 w-px bg-[#8a6a48]" />
        </div>
    );
};

export default App;
